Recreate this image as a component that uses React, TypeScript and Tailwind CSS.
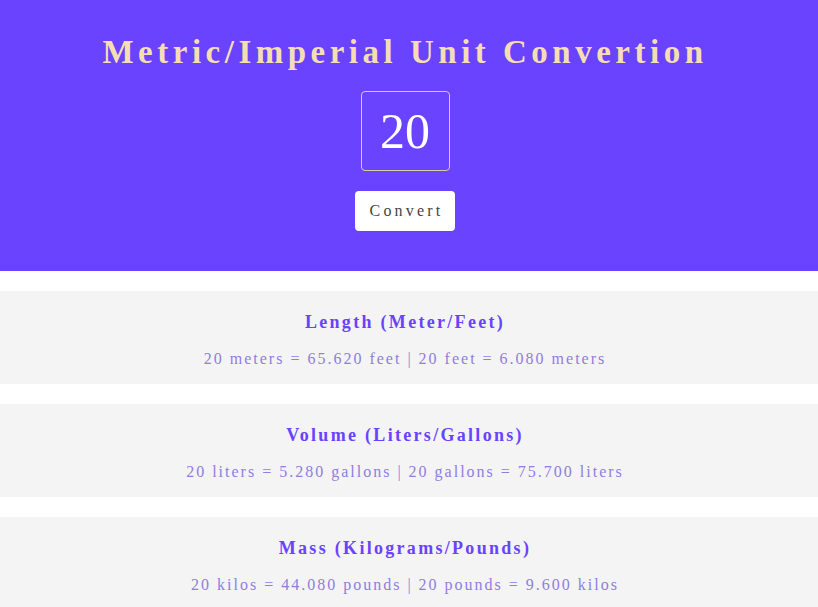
import React, { useState } from 'react';

const serif = { fontFamily: '"Liberation Serif", "Times New Roman", serif' };

function ResultCard({ title, text }: { title: string; text: string }) {
  return (
    <div className="flex h-[93px] flex-col items-center bg-[#f4f4f4] pr-[8px] pt-[20px]">
      <h2 className="text-[18px] font-bold leading-[22px] tracking-[2.3px] text-[#6943ff]">
        {title}
      </h2>
      <p className="mt-[16px] text-[16px] leading-[20px] tracking-[2px] text-[#8f7de0]">
        {text}
      </p>
    </div>
  );
}

export default function App() {
  const [value, setValue] = useState('20');

  return (
    <div className="min-h-screen bg-white" style={serif}>
      <header className="flex h-[271px] flex-col items-center bg-[#6943ff] pr-[8px] pt-[33px]">
        <h1 className="text-[33px] font-bold leading-[38px] tracking-[4.5px] text-[#f5deb3]">
          Metric/Imperial Unit Convertion
        </h1>
        <input
          value={value}
          onChange={(e) => setValue(e.target.value)}
          className="mt-[20px] h-[80px] w-[89px] rounded-[4px] border border-[#e0c9a6] bg-transparent text-center text-[50px] text-white outline-none"
          style={serif}
        />
        <button
          className="mt-[20px] h-[40px] w-[100px] rounded-[4px] bg-white pl-[3px] text-[16px] tracking-[3.2px] text-[#444]"
          style={serif}
        >
          Convert
        </button>
      </header>
      <main className="flex flex-col gap-[20px] pt-[20px]">
        <ResultCard
          title="Length (Meter/Feet)"
          text="20 meters = 65.620 feet | 20 feet = 6.080 meters"
        />
        <ResultCard
          title="Volume (Liters/Gallons)"
          text="20 liters = 5.280 gallons | 20 gallons = 75.700 liters"
        />
        <ResultCard
          title="Mass (Kilograms/Pounds)"
          text="20 kilos = 44.080 pounds | 20 pounds = 9.600 kilos"
        />
      </main>
    </div>
  );
}
